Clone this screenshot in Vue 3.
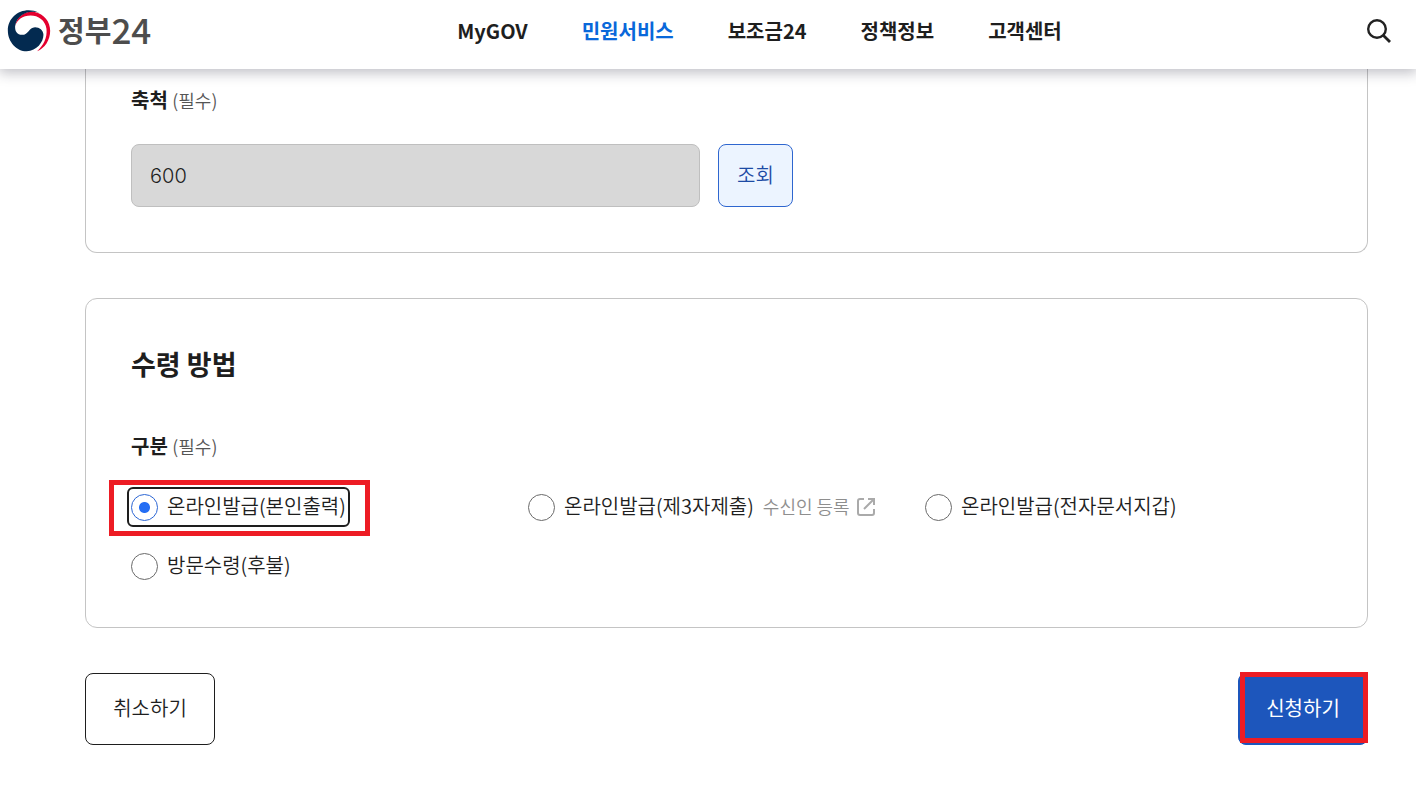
<script setup>
import { ref } from "vue";

const menus = ref([
  { id: 1, label: "MyGOV" },
  { id: 2, label: "민원서비스", active: true },
  { id: 3, label: "보조금24" },
  { id: 4, label: "정책정보" },
  { id: 5, label: "고객센터" },
]);

const scale = ref("600");

const methods = ref([
  { id: "self", label: "온라인발급(본인출력)", marked: true },
  { id: "third", label: "온라인발급(제3자제출)", link: "수신인 등록" },
  { id: "wallet", label: "온라인발급(전자문서지갑)" },
  { id: "visit", label: "방문수령(후불)" },
]);
const selected = ref("self");
</script>

<template>
  <header class="header">
    <a href="#" class="logo">
      <svg class="logo-mark" viewBox="22 27 130 128" aria-hidden="true">
        <path
          fill="#e4002f"
          d="M46 78C48 50 76 30 104 36C132 43 150 64 150 92C150 120 134 144 111 153C130 136 142 112 139 86C136 60 114 46 92 46C68 46 50 60 46 78Z"
        />
        <path
          fill="#032a50"
          d="M118 38C72 16 24 45 24 91C24 125 50 153 80 153C110 152 130 126 130 104C130 90 118 81 105 81C86 82 86 104 66 104C50 104 44 90 46 76C52 42 88 29 118 38Z"
        />
      </svg>
      <span class="logo-text">정부<span class="logo-num">24</span></span>
    </a>
    <nav class="nav">
      <a
        v-for="menu in menus"
        :key="menu.id"
        href="#"
        class="nav-link"
        :class="{ active: menu.active }"
        >{{ menu.label }}</a
      >
    </nav>
    <button type="button" class="search" aria-label="검색">
      <svg viewBox="0 0 26 26" fill="none" stroke="#222" stroke-width="2.4">
        <circle cx="11" cy="11" r="8.8" />
        <path d="M17.2 17.2L24 24" stroke-width="2.8" />
      </svg>
    </button>
  </header>

  <main class="main">
    <section class="card card-scale">
      <label for="scale" class="field-label">
        축척 <span class="required">(필수)</span>
      </label>
      <div class="scale-row">
        <input id="scale" v-model="scale" class="scale-input" type="text" disabled />
        <button type="button" class="btn btn-lookup">조회</button>
      </div>
    </section>

    <section class="card card-method">
      <h2 class="title">수령 방법</h2>
      <h3 id="method-label" class="field-label">
        구분 <span class="required">(필수)</span>
      </h3>
      <div class="methods" role="radiogroup" aria-labelledby="method-label">
        <div v-for="method in methods" :key="method.id" class="method">
          <label class="radio" :class="{ focused: method.marked }">
            <input
              v-model="selected"
              class="radio-input"
              type="radio"
              name="method"
              :value="method.id"
            />
            <span class="radio-text">{{ method.label }}</span>
            <span v-if="method.marked" class="mark mark-radio"></span>
          </label>
          <a v-if="method.link" href="#" class="register">
            <span class="register-text">{{ method.link }}</span>
            <svg viewBox="0 0 20 20" fill="none" stroke="#aaa" stroke-width="2">
              <path d="M8 2H4Q2 2 2 4V16Q2 18 4 18H16Q18 18 18 16V12" />
              <path d="M12 2H18V8M18 2L8 12" />
            </svg>
          </a>
        </div>
      </div>
    </section>

    <div class="actions">
      <button type="button" class="btn btn-cancel">취소하기</button>
      <button type="button" class="btn btn-submit">
        신청하기
        <span class="mark mark-submit"></span>
      </button>
    </div>
  </main>
</template>

<style>
body {
  background-color: #fff;
  color: #1e1e1e;
  font-family: "Noto Sans CJK KR", sans-serif;
  font-size: 20px;
}
</style>

<style scoped>
* {
  box-sizing: border-box;
}

a {
  color: inherit;
  text-decoration: none;
}

button,
input {
  font-family: inherit;
  font-size: inherit;
}

.header {
  position: relative;
  z-index: 1;
  display: flex;
  align-items: center;
  height: 69px;
  padding: 0 24px 8px 7px;
  background-color: #fff;
  box-shadow: 0 3px 12px 1px rgba(30, 30, 50, 0.28);
}

.logo {
  display: flex;
  align-items: center;
  gap: 7px;
}

.logo-mark {
  width: 44px;
  height: 43px;
}

.logo-text {
  display: flex;
  align-items: center;
  padding-bottom: 4px;
  color: #4d4d4d;
  font-size: 29px;
  font-weight: 700;
  line-height: 40px;
}

.logo-num {
  font-size: 35px;
  font-weight: 500;
}

.nav {
  display: flex;
  gap: 54px;
  margin-left: 306px;
  font-weight: 700;
  line-height: 30px;
}

.nav-link.active {
  color: #0968da;
}

.search {
  width: 26px;
  height: 26px;
  margin-left: auto;
  padding: 0;
  border: none;
  background: none;
}

.search svg {
  display: block;
}

.main {
  padding: 0 48px 46px 85px;
}

.card {
  padding: 45px;
  border: 1px solid #c4c4c4;
  border-radius: 12px;
}

.card-scale {
  padding-top: 16px;
  border-top: none;
  border-top-left-radius: 0;
  border-top-right-radius: 0;
}

.card-method {
  margin-top: 45px;
  padding-top: 44px;
}

.field-label {
  display: block;
  margin: 0;
  font-size: 20px;
  font-weight: 700;
  line-height: 30px;
}

.required {
  color: #555;
  font-size: 18px;
  font-weight: 350;
}

.scale-row {
  display: flex;
  gap: 18px;
  margin-top: 29px;
}

.scale-input {
  width: 569px;
  height: 63px;
  padding: 0 18px;
  border: 1px solid #bfbfbf;
  border-radius: 8px;
  background-color: #d8d8d8;
  color: #1e1e1e;
  font-family: Inter, sans-serif;
  font-weight: 300;
}

.btn {
  padding: 0 0 3px;
  border: 1px solid #1e1e1e;
  border-radius: 8px;
  background-color: #fff;
  color: #1e1e1e;
  font-weight: 350;
}

.btn-lookup {
  width: 75px;
  border-color: #2e66cf;
  background-color: #ecf4ff;
  color: #1d4ba5;
}

.title {
  margin: 0 0 46px;
  font-size: 27px;
  font-weight: 700;
  line-height: 42px;
}

.methods {
  display: grid;
  grid-template-columns: repeat(3, 1fr);
  row-gap: 27px;
  margin-top: 30px;
}

.method {
  display: flex;
  align-items: center;
  gap: 9px;
  line-height: 30px;
}

.radio {
  position: relative;
  display: flex;
  align-items: center;
  gap: 9px;
  font-weight: 350;
  white-space: nowrap;
}

.radio.focused {
  border-radius: 2px;
  outline: 2px solid #1e1e1e;
  outline-offset: 2px;
}

.radio-input {
  appearance: none;
  width: 27px;
  height: 27px;
  margin: 0;
  border: 1px solid #6a6a6a;
  border-radius: 50%;
  outline: none;
}

.radio-input:checked {
  border-color: #2c66d4;
  background: radial-gradient(circle, #256ef4 5px, #fff 6px);
}

.radio-text,
.register-text {
  padding-bottom: 2px;
}

.register {
  display: flex;
  align-items: center;
  gap: 6px;
  color: #8e8e8e;
  font-size: 18px;
  font-weight: 350;
}

.register svg {
  width: 20px;
  height: 20px;
}

.actions {
  display: flex;
  justify-content: space-between;
  margin-top: 45px;
}

.btn-cancel,
.btn-submit {
  width: 130px;
  height: 72px;
}

.btn-submit {
  position: relative;
  border-color: #1d56bc;
  background-color: #1d56bc;
  color: #fff;
  font-weight: 400;
}

/* red highlight boxes drawn over the controls */
.mark {
  position: absolute;
  border: 5px solid #ed1c24;
  pointer-events: none;
}

.mark-radio {
  inset: -11px -24px -13px -22px;
}

.mark-submit {
  inset: -2px -1px 1px 1px;
}
</style>
